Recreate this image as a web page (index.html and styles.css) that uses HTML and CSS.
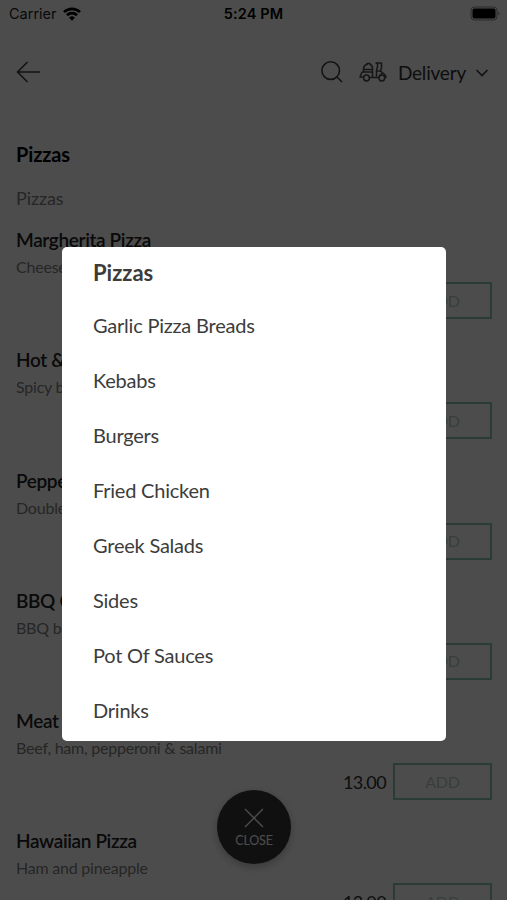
FILE: index.html
```html
<!DOCTYPE html>
<html lang="en">
<head>
<meta charset="utf-8">
<title>Pizzas</title>
<link rel="stylesheet" href="styles.css">
</head>
<body>
<main class="screen">
  <header class="status">
    <div class="carrier"><span>Carrier</span>
      <svg width="18" height="14" viewBox="0 0 18 14" fill="none" stroke="#000" stroke-width="2.7"><path d="M1 5.1a11.4 11.4 0 0 1 16 0M4 8.2a7.1 7.1 0 0 1 10 0"/><path d="M9 13.7l-2.9-3a4.1 4.1 0 0 1 5.8 0z" fill="#000" stroke="none"/></svg>
    </div>
    <b class="time">5:24 PM</b>
    <svg class="battery" width="31" height="16" viewBox="0 0 31 16"><rect x="1" y="1" width="26" height="13" rx="3.5" fill="none" stroke="#888"/><rect x="2.5" y="2.5" width="23" height="10" rx="2" fill="#000"/><path d="M28.5 5.5q2 2 0 4z" fill="#888"/></svg>
  </header>
  <nav class="toolbar">
    <svg class="back" width="26" height="24" viewBox="0 0 26 24" fill="none" stroke="#404040" stroke-width="1.6"><path d="M24 12H1.5M11.5 2L1.5 12l10 10"/></svg>
    <svg class="search" width="22" height="22" viewBox="0 0 22 22" fill="none" stroke="#404040" stroke-width="1.6"><circle cx="9.7" cy="9.6" r="8.8"/><path d="M16 16l5 5"/></svg>
    <svg class="scooter" width="28" height="20" viewBox="0 0 28 20" fill="none" stroke="#484848" stroke-width="1.5" stroke-linejoin="round"><path d="M4.500 10V6.500Q5 3 8 2.500V1.500h3v1Q13.500 3 13.500 6.500V10M5 7.500h8.500M3 10h10.500v5M3 10L1 15h3.500M10.500 15.500h9M17.500 14.500V8L18.500 5V2L17 1h5.500v5l-1 3 3.500 3q2 1 2 4"/><path d="M17.500 9h4M20 15l3-4"/><circle cx="7.500" cy="16" r="2.900"/><circle cx="22.800" cy="16" r="2.900"/></svg>
    <span class="mode">Delivery</span>
    <svg class="chevron" width="14" height="10" viewBox="0 0 14 10" fill="none" stroke="#404040" stroke-width="1.7"><path d="M1.5 3L7 8.5 12.5 3"/></svg>
  </nav>
  <h1>Pizzas</h1>
  <p class="subtitle">Pizzas</p>
  <section class="menu">
    <article class="item"><h2>Margherita Pizza</h2><p>Cheese</p><div class="buy"><span>13.00</span><button>ADD</button></div></article>
    <article class="item"><h2>Hot &amp; Spicy</h2><p>Spicy beef</p><div class="buy"><span>13.00</span><button>ADD</button></div></article>
    <article class="item"><h2>Pepperoni</h2><p>Double</p><div class="buy"><span>13.00</span><button>ADD</button></div></article>
    <article class="item"><h2>BBQ Chicken</h2><p>BBQ base</p><div class="buy"><span>13.00</span><button>ADD</button></div></article>
    <article class="item"><h2>Meat</h2><p>Beef, ham, pepperoni &amp; salami</p><div class="buy"><span>13.00</span><button>ADD</button></div></article>
    <article class="item"><h2>Hawaiian Pizza</h2><p>Ham and pineapple</p><div class="buy"><span>13.00</span><button>ADD</button></div></article>
  </section>
</main>
<div class="close">
  <svg width="20" height="20" viewBox="0 0 20 20" stroke="#fff" stroke-width="1.4"><path d="M1 1l18 18M19 1L1 19"/></svg>
  <span>CLOSE</span>
</div>
<div class="overlay"></div>
<div class="dialog">
  <ul>
    <li class="active">Pizzas</li>
    <li>Garlic Pizza Breads</li>
    <li>Kebabs</li>
    <li>Burgers</li>
    <li>Fried Chicken</li>
    <li>Greek Salads</li>
    <li>Sides</li>
    <li>Pot Of Sauces</li>
    <li>Drinks</li>
  </ul>
</div>
</body>
</html>
```

FILE: styles.css
```css
* { box-sizing: border-box; margin: 0; padding: 0; }
body { position: relative; width: 507px; height: 900px; overflow: hidden; background: #fff; color: #303030; font-family: Lato, sans-serif; }
.screen { height: 900px; overflow: hidden; }
.status { display: grid; grid-template-columns: 1fr auto 1fr; align-items: center; height: 27px; padding: 0 6px 0 9px; font-family: Inter, sans-serif; font-size: 14.5px; color: #000; }
.carrier { display: flex; align-items: center; gap: 6px; height: 26px; color: #222; }
.time { margin-left: -3px; font-size: 14.5px; line-height: 26px; font-weight: 600; letter-spacing: .15px; }
.battery { justify-self: end; }
.toolbar { display: flex; align-items: center; height: 90px; padding: 0 18px 0 16px; }
.search { margin-left: auto; }
.scooter { margin-left: 16px; }
.mode { margin: 1px 0 0 11px; font-size: 19px; line-height: 24px; letter-spacing: -.2px; }
.chevron { margin-left: 9px; }
h1 { margin-top: 24px; padding-left: 16px; font-size: 20px; line-height: 26px; font-weight: 700; letter-spacing: -.15px; color: #000; }
.subtitle { margin-top: 19px; padding-left: 16px; font-size: 18px; line-height: 24px; letter-spacing: -.1px; color: #808080; }
.menu { margin-top: 18px; padding: 0 15px 0 16px; }
.item { height: 120.3px; }
.item h2 { font-size: 19px; line-height: 24px; font-weight: 600; letter-spacing: -.36px; color: #222; }
.item p { margin-top: 4px; font-size: 16px; line-height: 22px; letter-spacing: -.22px; color: #808080; }
.buy { display: flex; justify-content: flex-end; align-items: center; gap: 7px; margin-top: 4px; font-size: 18px; line-height: 36px; letter-spacing: -.6px; }
.buy button { width: 99px; height: 37px; border: 2px solid #8fc5b2; background: transparent; font: 16px/32px Lato, sans-serif; letter-spacing: -.2px; color: #bcd0c9; }
.close { position: absolute; left: 217px; top: 790px; display: flex; flex-direction: column; align-items: center; width: 74px; height: 74px; padding-top: 18px; border-radius: 50%; background: #383838; box-shadow: 0 3px 8px rgba(0,0,0,.25); color: #fff; font-size: 12.5px; line-height: 16px; letter-spacing: -.15px; }
.close span { margin-top: 5px; }
.overlay { position: absolute; inset: 0; background: rgba(0,0,0,.7); }
.dialog { position: absolute; left: 62px; top: 247px; width: 384px; height: 494px; padding-left: 31px; border-radius: 5px; background: #fff; }
.dialog ul { list-style: none; margin-top: -1px; }
.dialog li { height: 55px; line-height: 55px; font-size: 20px; letter-spacing: -.22px; color: #3c3c3c; }
.dialog li.active { height: 52px; font-size: 22px; line-height: 54px; font-weight: 700; letter-spacing: 0; }
```
